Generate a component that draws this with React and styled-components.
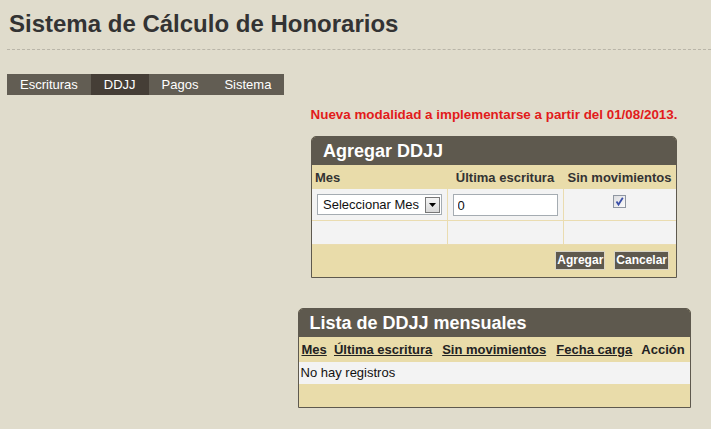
import styled, { createGlobalStyle } from "styled-components"

const GlobalStyle = createGlobalStyle`
    body {
        margin: 0;
        background-color: #e0dccc;
        font-family: "Liberation Sans", Arial, sans-serif;
        font-size: 13px;
        color: #222;
    }
`

const menu = ["Escrituras", "DDJJ", "Pagos", "Sistema"]

export default function App() {
    return (
        <Page>
            <GlobalStyle />
            <Header>
                <h1>Sistema de Cálculo de Honorarios</h1>
            </Header>

            <Nav>
                {menu.map((item) => (
                    <NavItem key={item} $active={item === "DDJJ"}>{item}</NavItem>
                ))}
            </Nav>

            <Body>
                <Sidebar />
                <Main>
                    <Notice>Nueva modalidad a implementarse a partir del 01/08/2013.</Notice>

                    <Panel $width="366px">
                        <PanelTitle>Agregar DDJJ</PanelTitle>
                        <FormTable>
                            <colgroup>
                                <col style={{ width: "135px" }} />
                                <col style={{ width: "116px" }} />
                                <col />
                            </colgroup>
                            <thead>
                                <tr>
                                    <Th>Mes</Th>
                                    <Th $center>Última escritura</Th>
                                    <Th $center>Sin movimientos</Th>
                                </tr>
                            </thead>
                            <tbody>
                                <FormRow $height="31px">
                                    <td>
                                        <SelectBox>
                                            <span>Seleccionar Mes</span>
                                            <SelectArrow>
                                                <svg width="7" height="4" viewBox="0 0 7 4">
                                                    <path d="M0 0H7L3.5 4Z" fill="#000" />
                                                </svg>
                                            </SelectArrow>
                                        </SelectBox>
                                    </td>
                                    <td>
                                        <TextInput defaultValue="0" />
                                    </td>
                                    <CheckCell>
                                        <FakeCheck>
                                            <svg width="11" height="11" viewBox="0 0 11 11">
                                                <path d="M2.5 5.5 L4.5 8.5 L8.8 1.8" stroke="#3a4fa8" strokeWidth="1.8" fill="none" />
                                            </svg>
                                        </FakeCheck>
                                    </CheckCell>
                                </FormRow>
                                <FormRow $height="24px">
                                    <td></td>
                                    <td></td>
                                    <td></td>
                                </FormRow>
                            </tbody>
                        </FormTable>
                        <PanelFooter>
                            <Button>Agregar</Button>
                            <Button>Cancelar</Button>
                        </PanelFooter>
                    </Panel>

                    <Panel $width="393px" $top="30px">
                        <PanelTitle>Lista de DDJJ mensuales</PanelTitle>
                        <ListTable>
                            <thead>
                                <tr>
                                    <ListTh $link>Mes</ListTh>
                                    <ListTh $link>Última escritura</ListTh>
                                    <ListTh $link>Sin movimientos</ListTh>
                                    <ListTh $link>Fecha carga</ListTh>
                                    <ListTh>Acción</ListTh>
                                </tr>
                            </thead>
                            <tbody>
                                <tr>
                                    <EmptyCell colSpan={5}>No hay registros</EmptyCell>
                                </tr>
                            </tbody>
                        </ListTable>
                        <ListFooter />
                    </Panel>
                </Main>
            </Body>
        </Page>
    )
}

const Page = styled.div`
    padding-left: 7px;
    width: 704px;
`

const Header = styled.div`
    padding: 10px 0 11px;
    border-bottom: 1px dashed #b9b5a8;

    h1 {
        margin: 0 0 0 2px;
        font-size: 24px;
        line-height: 28px;
        font-weight: 700;
        color: #333;
    }
`

const Nav = styled.ul`
    display: flex;
    width: fit-content;
    margin: 24px 0 0;
    padding: 0;
    list-style: none;
    background-color: #625d53;
`

const NavItem = styled.li`
    padding: 0 13px;
    height: 21px;
    line-height: 21px;
    color: #fff;
    font-size: 13px;
    background-color: ${(p) => (p.$active ? "#453e36" : "transparent")};
`

const Body = styled.div`
    display: flex;
    margin-left: -7px;
`

const Sidebar = styled.div`
    width: 277px;
    flex-shrink: 0;
`

const Main = styled.div`
    flex: 1;
    display: flex;
    flex-direction: column;
    align-items: center;
    padding-top: 12px;
`

const Notice = styled.div`
    color: #e21b1b;
    font-weight: 700;
    font-size: 13.4px;
    line-height: 16px;
    margin-bottom: 13px;
`

const Panel = styled.div`
    width: ${(p) => p.$width};
    margin-top: ${(p) => p.$top || "0"};
    box-sizing: border-box;
    border: 1px solid #5e594e;
    border-radius: 5px 5px 0 0;
    background-color: #e9dcaa;
    overflow: hidden;
`

const PanelTitle = styled.div`
    height: 28px;
    line-height: 28px;
    padding-left: 11px;
    background-color: #5e594e;
    color: #fff;
    font-size: 18px;
    font-weight: 700;
`

const FormTable = styled.table`
    width: 100%;
    border-collapse: collapse;
    table-layout: fixed;
`

const Th = styled.th`
    height: 24px;
    padding: 0 3px;
    white-space: nowrap;
    text-align: ${(p) => (p.$center ? "center" : "left")};
    font-size: 13px;
    font-weight: 700;
    color: #333;
    background-color: #e9dcaa;
`

const FormRow = styled.tr`
    height: ${(p) => p.$height};
    background-color: #f3f3f3;

    td {
        padding: 0;
        border-right: 1px solid #eadcb0;
        border-bottom: 1px solid #eadcb0;
        vertical-align: top;
    }

    td:last-child {
        border-right: none;
    }
`

const SelectBox = styled.div`
    display: flex;
    align-items: center;
    justify-content: space-between;
    box-sizing: border-box;
    width: 125px;
    height: 21px;
    margin: 5px 0 0 5px;
    padding: 0 1px 0 5px;
    background-color: #fff;
    border: 1px solid #a5acb2;
    font-size: 13px;
    color: #111;
`

const SelectArrow = styled.span`
    display: flex;
    align-items: center;
    justify-content: center;
    width: 15px;
    height: 16px;
    box-sizing: border-box;
    border: 1px solid #777;
    background: linear-gradient(#f4f4f4, #d8d8d8);
`

const TextInput = styled.input`
    box-sizing: border-box;
    width: 105px;
    height: 22px;
    margin: 5px 0 0 5px;
    padding: 0 4px;
    border: 1px solid #a5acb2;
    font-family: "Liberation Sans", Arial, sans-serif;
    font-size: 13px;
    color: #111;
    outline: none;
`

const CheckCell = styled.td`
    text-align: center;
`

const FakeCheck = styled.span`
    display: inline-flex;
    align-items: center;
    justify-content: center;
    box-sizing: border-box;
    width: 13px;
    height: 13px;
    margin-top: 6px;
    border: 1px solid #8f96a1;
    background: linear-gradient(135deg, #dcdde0, #fbfbfb);
`

const PanelFooter = styled.div`
    display: flex;
    justify-content: flex-end;
    gap: 9px;
    height: 32px;
    padding: 6px 7px 0 0;
    box-sizing: border-box;
`

const Button = styled.button`
    height: 19px;
    padding: 0 1px;
    border: 1px solid #d8d4c6;
    background-color: #5e594e;
    color: #fff;
    font-family: "Liberation Sans", Arial, sans-serif;
    font-size: 12px;
    font-weight: 700;
    line-height: 16px;
`

const ListTable = styled.table`
    width: 100%;
    border-collapse: collapse;
`

const ListTh = styled.th`
    height: 25px;
    padding: 0 3px;
    text-align: left;
    white-space: nowrap;
    font-size: 13px;
    font-weight: 700;
    color: #222;
    text-decoration: ${(p) => (p.$link ? "underline" : "none")};
`

const EmptyCell = styled.td`
    height: 22px;
    padding: 0 2px;
    background-color: #f3f3f3;
    font-size: 13px;
    color: #111;
`

const ListFooter = styled.div`
    height: 23px;
`
